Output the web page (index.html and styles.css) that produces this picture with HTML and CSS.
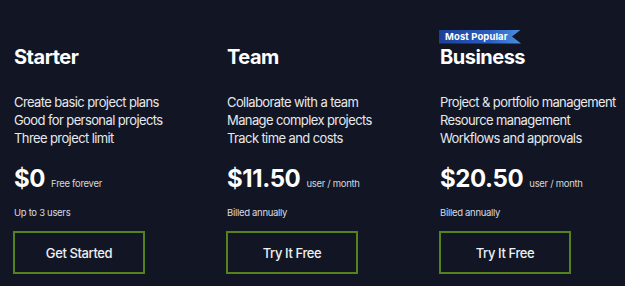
FILE: index.html
```html
<!DOCTYPE html>
<html lang="en">
<head>
<meta charset="utf-8">
<title>Pricing</title>
<link rel="stylesheet" href="styles.css">
</head>
<body>
<main class="plans">
  <section class="plan">
    <div class="badge-slot"></div>
    <h2 class="plan-title">Starter</h2>
    <ul class="features">
      <li>Create basic project plans</li>
      <li>Good for personal projects</li>
      <li>Three project limit</li>
    </ul>
    <div class="price-row"><span class="price">$0</span><span class="price-note">Free forever</span></div>
    <p class="meta">Up to 3 users</p>
    <a class="cta" href="#">Get Started</a>
  </section>
  <section class="plan">
    <div class="badge-slot"></div>
    <h2 class="plan-title">Team</h2>
    <ul class="features">
      <li>Collaborate with a team</li>
      <li>Manage complex projects</li>
      <li>Track time and costs</li>
    </ul>
    <div class="price-row"><span class="price">$11.50</span><span class="price-note">user / month</span></div>
    <p class="meta">Billed annually</p>
    <a class="cta" href="#">Try It Free</a>
  </section>
  <section class="plan">
    <div class="badge-slot"><span class="badge">Most Popular</span></div>
    <h2 class="plan-title">Business</h2>
    <ul class="features">
      <li>Project &amp; portfolio management</li>
      <li>Resource management</li>
      <li>Workflows and approvals</li>
    </ul>
    <div class="price-row"><span class="price">$20.50</span><span class="price-note">user / month</span></div>
    <p class="meta">Billed annually</p>
    <a class="cta" href="#">Try It Free</a>
  </section>
</main>
</body>
</html>
```

FILE: styles.css
```css
html, body {
  margin: 0;
  padding: 0;
  background: #121624;
  height: 100%;
}

body {
  font-family: Inter, "Noto Sans", sans-serif;
  color: #e8eaee;
  overflow: hidden;
}

.plans {
  display: grid;
  grid-template-columns: 213px 213px 1fr;
  padding-left: 13px;
}

.plan {
  display: flex;
  flex-direction: column;
  align-items: flex-start;
  padding-top: 24px;
  padding-left: 1px;
}

.badge-slot {
  height: 14px;
  margin-left: -1px;
}

.badge {
  display: inline-flex;
  align-items: center;
  width: 82px;
  height: 14px;
  box-sizing: border-box;
  padding-left: 6px;
  font-size: 9.5px;
  font-weight: 700;
  color: #ffffff;
  letter-spacing: 0.1px;
  white-space: nowrap;
  background: linear-gradient(90deg, #1d3f96 0%, #2a5cc0 60%, #4a8fe0 100%);
  clip-path: polygon(0 0, 100% 0, 89% 50%, 100% 100%, 0 100%);
}

.plan-title {
  margin: 7px 0 0;
  font-size: 20px;
  line-height: 24px;
  font-weight: 700;
  letter-spacing: -0.5px;
  color: #ffffff;
}

.features {
  list-style: none;
  margin: 24px 0 0;
  padding: 0;
  font-size: 13px;
  line-height: 18px;
  letter-spacing: -0.6px;
  white-space: nowrap;
  color: #e6e8ec;
}

.price-row {
  display: flex;
  align-items: baseline;
  gap: 6px;
  margin-top: 17px;
}

.price {
  font-size: 24px;
  line-height: 29px;
  font-weight: 700;
  letter-spacing: -0.4px;
  color: #ffffff;
}

.price-note {
  font-size: 9.5px;
  letter-spacing: -0.3px;
  color: #d4d7dd;
}

.meta {
  margin: 14px 0 0;
  font-size: 9.5px;
  line-height: 12px;
  letter-spacing: -0.3px;
  color: #d9dce2;
}

.cta {
  display: flex;
  align-items: center;
  justify-content: center;
  margin: 12px 0 0 -1px;
  width: 132px;
  height: 43px;
  box-sizing: border-box;
  border: 2px solid #55821a;
  font-size: 13px;
  font-weight: 500;
  letter-spacing: -0.4px;
  color: #eef0f3;
  text-decoration: none;
}
```
